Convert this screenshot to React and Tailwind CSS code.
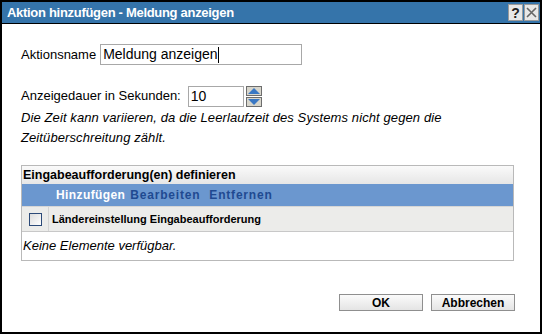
export default function App() {
  return (
    <div className="w-[542px] h-[334px] bg-white border-2 border-black flex flex-col font-['Liberation_Sans',Arial,sans-serif] text-[13px] text-black overflow-hidden">
      {/* title bar */}
      <div className="h-[22px] bg-[#3574aa] border-b border-black flex items-center justify-between pl-[5px] pr-[1px] shrink-0">
        <span className="text-white font-bold text-[13px] tracking-[-0.3px]">Aktion hinzufügen - Meldung anzeigen</span>
        <div className="flex gap-[1px]">
          <span className="w-[15px] h-[17px] bg-[#e8e8e8] border border-[#9a9a9a] flex items-center justify-center text-[14px] font-bold text-[#222] leading-none">?</span>
          <span className="w-[15px] h-[17px] bg-[#e8e8e8] border border-[#9a9a9a] flex items-center justify-center text-[#555]">
            <svg width="11" height="11" viewBox="0 0 11 11"><path d="M1 1L10 10M10 1L1 10" stroke="#666" strokeWidth="1.6" /></svg>
          </span>
        </div>
      </div>

      <div className="flex flex-col pl-[19px] pr-[28px]">
        <div className="flex items-center mt-[20px] h-[21px]">
          <span>Aktionsname</span>
          <div className="ml-[4px] w-[202px] h-[21px] border border-[#a8a8a8] flex items-center pl-[2px] text-[14px]">
            Meldung anzeigen<span className="w-[1px] h-[16px] bg-black" />
          </div>
        </div>

        <div className="flex items-center mt-[20px] h-[22px]">
          <span>Anzeigedauer in Sekunden:</span>
          <div className="ml-[7px] w-[56px] h-[21px] border border-[#a8a8a8] flex items-center pl-[2px] text-[14px]">10</div>
          <div className="ml-[2px] flex flex-col gap-[1px]">
            <span className="w-[16px] h-[10px] bg-[#d8d6cc] border border-[#6d6d6d] flex items-center justify-center">
              <svg width="12" height="6" viewBox="0 0 12 6"><path d="M6 0L12 6H0Z" fill="#3a78c4" /></svg>
            </span>
            <span className="w-[16px] h-[10px] bg-[#d8d6cc] border border-[#6d6d6d] flex items-center justify-center">
              <svg width="12" height="6" viewBox="0 0 12 6"><path d="M0 0H12L6 6Z" fill="#3a78c4" /></svg>
            </span>
          </div>
        </div>

        <p className="italic text-[13px] leading-[20px] mt-[1px] tracking-[0.1px]">
          Die Zeit kann variieren, da die Leerlaufzeit des Systems nicht gegen die Zeitüberschreitung zählt.
        </p>

        {/* table */}
        <div className="mt-[17px] w-[493px] border border-[#b9b9b9] flex flex-col">
          <div className="h-[18px] bg-gradient-to-b from-[#fafafa] to-[#e6e6e6] flex items-center text-[12.5px] font-bold pl-[1px]">
            Eingabeaufforderung(en) definieren
          </div>
          <div className="h-[22px] bg-[#6b97cf] flex items-center gap-[5px] pl-[34px] font-bold text-[12px] tracking-[0.4px]">
            <span className="text-white">Hinzufügen</span>
            <span className="text-[#1f4a91] tracking-[0.8px]">Bearbeiten</span>
            <span className="text-[#1f4a91] ml-[4px] tracking-[0.8px]">Entfernen</span>
          </div>
          <div className="h-[26px] bg-[#ececea] border-t border-[#d6d6d6] border-b border-b-[#c8c8c8] flex items-center">
            <div className="w-[27px] h-full border-r border-[#d4d4d4] flex items-center justify-center">
              <span className="w-[13px] h-[13px] border border-[#2c4a78] bg-gradient-to-br from-[#dcdcdc] to-white" />
            </div>
            <span className="pl-[3px] font-bold text-[11px]">Ländereinstellung Eingabeaufforderung</span>
          </div>
          <div className="h-[28px] flex items-center italic text-[13px] pl-[1px]">Keine Elemente verfügbar.</div>
        </div>

        <div className="flex justify-end gap-[8px] mt-[33px] mr-[-3px]">
          <button className="w-[84px] h-[17px] border border-[#8f8f8f] bg-gradient-to-b from-[#fbfbfb] to-[#e4e4e4] font-bold text-[12px] flex items-center justify-center">OK</button>
          <button className="w-[84px] h-[17px] border border-[#8f8f8f] bg-gradient-to-b from-[#fbfbfb] to-[#e4e4e4] font-bold text-[12px] flex items-center justify-center">Abbrechen</button>
        </div>
      </div>
    </div>
  );
}
